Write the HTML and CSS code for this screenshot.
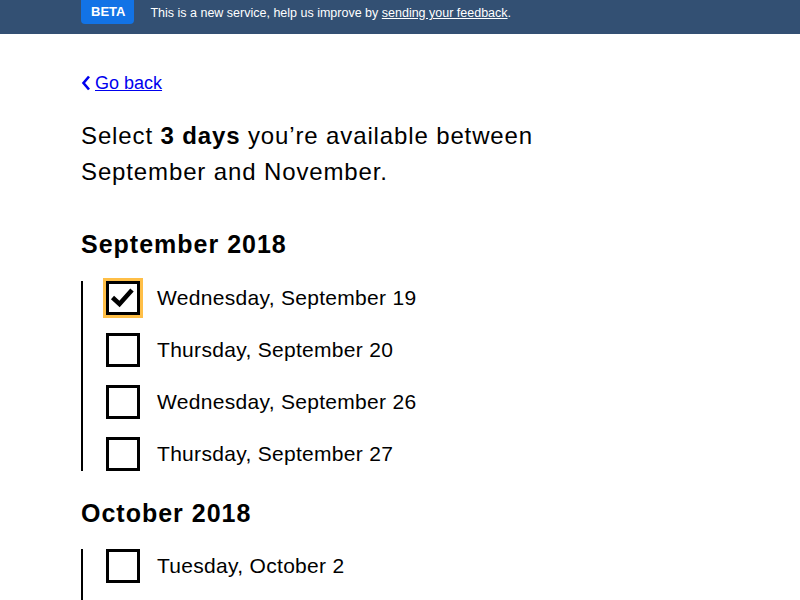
FILE: index.html
```html
<!DOCTYPE html>
<html lang="en">
<head>
<meta charset="utf-8">
<title>Select days</title>
<link rel="stylesheet" href="styles.css">
</head>
<body>
<header class="banner">
  <div class="banner-inner">
    <span class="badge">BETA</span>
    <span class="banner-text">This is a new service, help us improve by <a href="#" class="banner-link">sending your feedback</a>.</span>
  </div>
</header>
<main class="main">
  <a href="#" class="back">
    <svg class="chev" width="10" height="16" viewBox="0 0 10 16"><path d="M8 1.5 L2.5 8 L8 14.5" fill="none" stroke="currentColor" stroke-width="2.6"/></svg>
    <span class="back-text">Go back</span>
  </a>
  <p class="lead">Select <strong>3 days</strong> you’re available between September and November.</p>

  <h2 class="month">September 2018</h2>
  <ul class="days">
    <li class="day">
      <span class="box checked focus">
        <svg width="34" height="34" viewBox="0 0 34 34" class="tick"><path d="M6.5 16.5 L13.5 23 L26 9" fill="none" stroke="#000" stroke-width="4.6"/></svg>
      </span>
      <span class="label">Wednesday, September 19</span>
    </li>
    <li class="day"><span class="box"></span><span class="label">Thursday, September 20</span></li>
    <li class="day"><span class="box"></span><span class="label">Wednesday, September 26</span></li>
    <li class="day"><span class="box"></span><span class="label">Thursday, September 27</span></li>
  </ul>

  <h2 class="month month-next">October 2018</h2>
  <ul class="days">
    <li class="day"><span class="box"></span><span class="label">Tuesday, October 2</span></li>
    <li class="day"><span class="box"></span><span class="label">Wednesday, October 3</span></li>
  </ul>
</main>
</body>
</html>
```

FILE: styles.css
```css
html, body {
  margin: 0;
  padding: 0;
  background: #fff;
  font-family: "Liberation Sans", Arial, sans-serif;
  color: #000;
}

.banner {
  background: #335073;
  height: 34px;
}

.banner-inner {
  display: flex;
  align-items: flex-start;
  padding-left: 81px;
}

.badge {
  background: #1273e6;
  color: #fff;
  font-weight: bold;
  font-size: 13px;
  line-height: 24px;
  height: 24px;
  padding: 0 9px 0 10px;
  border-radius: 0 0 4px 4px;
}

.banner-text {
  color: #fff;
  font-size: 12.5px;
  line-height: 26px;
  margin-left: 16px;
}

.banner-link {
  color: #fff;
}

.main {
  padding-left: 81px;
  padding-top: 37px;
}

.back {
  display: inline-flex;
  align-items: center;
  gap: 4px;
  color: #0000ee;
  font-size: 18px;
  line-height: 24px;
  text-decoration: none;
}

.back-text {
  text-decoration: underline;
}

.chev {
  display: block;
}

.lead {
  font-size: 24px;
  line-height: 36px;
  letter-spacing: 0.87px;
  margin: 23px 0 0;
  max-width: 500px;
}

.month {
  font-size: 25px;
  line-height: 30px;
  letter-spacing: 1px;
  font-weight: bold;
  margin: 39px 0 22px;
}

.month-next {
  margin-top: 27px;
  margin-bottom: 21px;
}

.days {
  list-style: none;
  margin: 0;
  padding: 0 0 0 23px;
  border-left: 2px solid #000;
  display: flex;
  flex-direction: column;
  gap: 18px;
}

.day {
  display: flex;
  align-items: center;
  gap: 17px;
}

.box {
  width: 34px;
  height: 34px;
  box-sizing: border-box;
  border: 3px solid #000;
  background: #fff;
  position: relative;
  flex: none;
}

.tick {
  position: absolute;
  left: -3px;
  top: -3px;
}

.focus {
  outline: 3px solid #ffbf47;
}

.label {
  font-size: 21px;
  line-height: 24px;
  letter-spacing: 0.3px;
}
```
